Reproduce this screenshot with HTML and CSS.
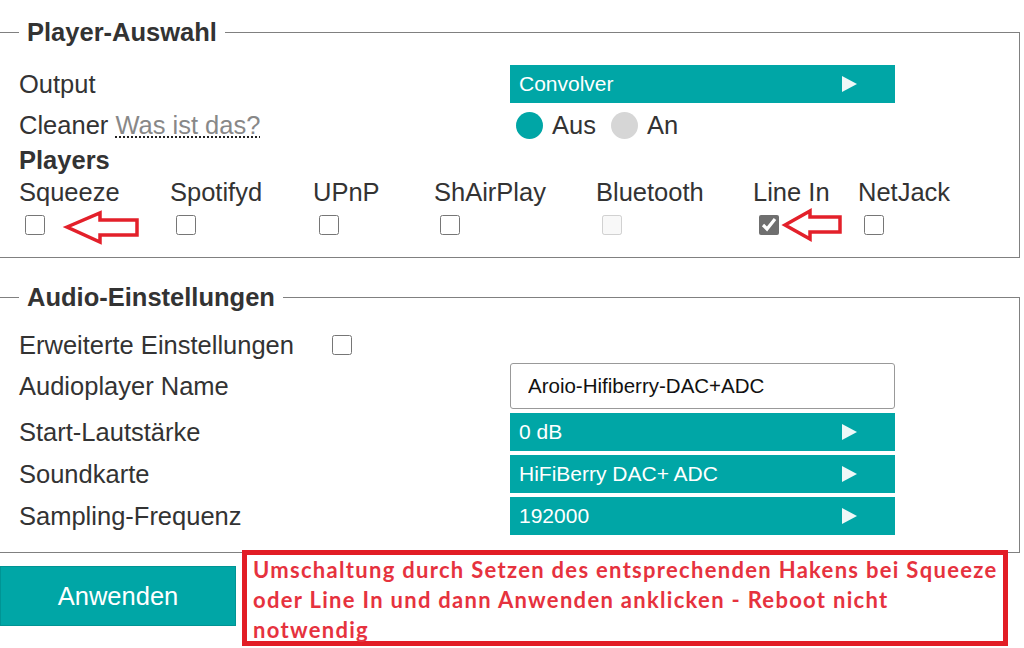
FILE: index.html
```html
<!DOCTYPE html>
<html lang="de">
<head>
    <meta charset="UTF-8">
    <meta name="viewport" content="width=device-width, initial-scale=1.0">
    <title>Aroio - Einstellungen</title>
    <link rel="stylesheet" href="styles.css">
</head>
<body>
    <form class="settings">
        <!-- Player-Auswahl -->
        <fieldset class="box box-player">
            <legend>Player-Auswahl</legend>

            <div class="row row-output">
                <span class="label">Output</span>
                <div class="select"><span>Convolver</span><i class="tri"></i></div>
            </div>

            <div class="row row-cleaner">
                <span class="label">Cleaner <a href="#" class="help">Was ist das?</a></span>
                <div class="radios">
                    <span class="radio on"></span><span class="radio-text">Aus</span>
                    <span class="radio"></span><span class="radio-text">An</span>
                </div>
            </div>

            <div class="players-title">Players</div>
            <div class="players">
                <div class="player"><span>Squeeze</span><div class="check"><input type="checkbox"></div></div>
                <div class="player"><span>Spotifyd</span><div class="check"><input type="checkbox"></div></div>
                <div class="player"><span>UPnP</span><div class="check"><input type="checkbox"></div></div>
                <div class="player"><span>ShAirPlay</span><div class="check"><input type="checkbox"></div></div>
                <div class="player"><span>Bluetooth</span><div class="check"><input type="checkbox" disabled></div></div>
                <div class="player"><span>Line In</span><div class="check"><input type="checkbox" checked></div></div>
                <div class="player"><span>NetJack</span><div class="check"><input type="checkbox"></div></div>
            </div>
        </fieldset>

        <!-- Audio-Einstellungen -->
        <fieldset class="box box-audio">
            <legend>Audio-Einstellungen</legend>

            <div class="row row-extended">
                <span class="label label-short">Erweiterte Einstellungen</span>
                <input type="checkbox">
            </div>

            <div class="row row-name">
                <span class="label">Audioplayer Name</span>
                <input type="text" class="text-input" value="Aroio-Hifiberry-DAC+ADC">
            </div>

            <div class="row">
                <span class="label">Start-Lautstärke</span>
                <div class="select"><span>0 dB</span><i class="tri"></i></div>
            </div>

            <div class="row">
                <span class="label">Soundkarte</span>
                <div class="select"><span>HiFiBerry DAC+ ADC</span><i class="tri"></i></div>
            </div>

            <div class="row">
                <span class="label">Sampling-Frequenz</span>
                <div class="select"><span>192000</span><i class="tri"></i></div>
            </div>
        </fieldset>

        <button type="button" class="apply">Anwenden</button>
    </form>

    <!-- Anmerkungen -->
    <svg class="arrows" width="1024" height="648" viewBox="0 0 1024 648">
        <polygon points="67,227 100,213 100,220 137,220 137,235 100,235 100,242" />
        <polygon points="785,225 810,211 810,217 840,217 840,232 810,232 810,239" />
    </svg>

    <div class="note">
        Umschaltung durch Setzen des entsprechenden Hakens bei Squeeze<br>
        oder Line In und dann Anwenden anklicken - Reboot nicht<br>
        notwendig
    </div>
</body>
</html>
```

FILE: styles.css
```css
* {
    box-sizing: border-box;
}

body {
    margin: 0;
    position: relative;
    height: 648px;
    overflow: hidden;
    background: #fff;
    color: #333;
    font-family: "Liberation Sans", Arial, sans-serif;
    font-size: 25.5px;
}

.box {
    width: 1020px;
    min-width: 0;
    margin: 18px 0 0;
    padding: 18px 0 18px 19px;
    border: 1px solid #808080;
    border-left: none;
}

.box-audio {
    margin-top: 25px;
    padding-top: 15px;
    padding-bottom: 17px;
}

legend {
    padding: 0 8px;
    line-height: 29px;
    font-weight: bold;
}

.row {
    display: flex;
    align-items: center;
    height: 38px;
}

.label {
    width: 491px;
    flex-shrink: 0;
}

.label-short {
    width: 313px;
}

.row-cleaner {
    height: 44px;
}

.help {
    color: #888;
    text-decoration: underline dotted #222;
    text-decoration-thickness: 2px;
    text-underline-offset: 3px;
}

.select {
    display: flex;
    align-items: center;
    justify-content: space-between;
    width: 385px;
    height: 38px;
    padding-left: 9px;
    background: #00a6a6;
    color: #fff;
    font-size: 21px;
}

.tri {
    width: 0;
    height: 0;
    margin-right: 38px;
    border-top: 8px solid transparent;
    border-bottom: 8px solid transparent;
    border-left: 15px solid #eef8f8;
}

.radios {
    display: flex;
    align-items: center;
    margin-left: 6px;
}

.radio {
    width: 27px;
    height: 27px;
    border-radius: 50%;
    background: #d6d6d6;
    margin-right: 9px;
}

.radio.on {
    background: #00a6a6;
}

.radio-text {
    margin-right: 15px;
}

.players-title {
    height: 26px;
    line-height: 26px;
    font-weight: bold;
}

.players {
    display: grid;
    grid-template-columns: 151px 143px 121px 162px 157px 105px 1fr;
}

.player span {
    display: block;
    line-height: 38px;
}

.check {
    display: flex;
    align-items: center;
    height: 28px;
}

input[type="checkbox"] {
    width: 20px;
    height: 20px;
    margin: 0 0 0 6px;
    accent-color: #6f6f6f;
}

.row-extended {
    height: 36px;
}

.row-extended input[type="checkbox"] {
    margin: 0;
}

.row-name {
    height: 46px;
    margin-bottom: 4px;
}

.row-name ~ .row {
    margin-bottom: 4px;
}

.row-name ~ .row:last-child {
    margin-bottom: 0;
}

.text-input {
    width: 385px;
    height: 46px;
    padding: 0 0 0 17px;
    border: 1px solid #999;
    border-radius: 3px;
    color: #111;
    font-family: "Liberation Sans", Arial, sans-serif;
    font-size: 20.5px;
}

.apply {
    display: block;
    width: 236px;
    height: 60px;
    margin-top: 13px;
    background: #00a6a6;
    border: 1px solid #009494;
    color: #fff;
    font-family: "Liberation Sans", Arial, sans-serif;
    font-size: 25.5px;
}

.arrows {
    position: absolute;
    top: 0;
    left: 0;
    pointer-events: none;
}

.arrows polygon {
    fill: #fff;
    stroke: #e3202a;
    stroke-width: 3.5;
    stroke-linejoin: miter;
}

.note {
    position: absolute;
    left: 242px;
    top: 550px;
    width: 766px;
    height: 96px;
    padding: 0 0 0 6px;
    border: 5px solid #e21d25;
    background: #fff;
    color: #e6323e;
    font-family: Lato, "Open Sans", sans-serif;
    font-weight: bold;
    font-size: 22px;
    letter-spacing: 1.3px;
    line-height: 30px;
}
```
